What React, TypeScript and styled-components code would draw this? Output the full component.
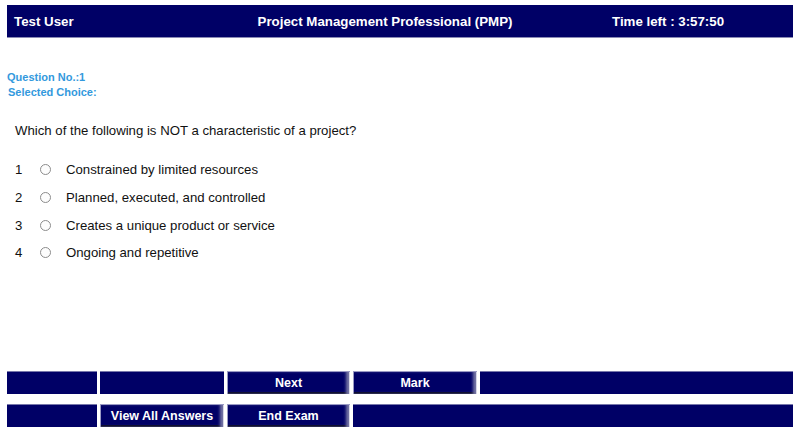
import * as React from 'react';
import styled, { createGlobalStyle } from 'styled-components';

const GlobalStyle = createGlobalStyle`
  html, body {
    margin: 0;
    padding: 0;
    background: #ffffff;
  }
  body {
    font-family: 'Liberation Sans', Arial, sans-serif;
  }
`;

const NAVY = '#000066';

const Page = styled.div`
  min-height: 100vh;
  box-sizing: border-box;
  padding: 5px 7px 6px 7px;
  display: flex;
  flex-direction: column;
`;

const Header = styled.div`
  height: 33px;
  background: ${NAVY};
  border-bottom: 1px solid #8a8ab4;
  box-sizing: border-box;
  display: grid;
  grid-template-columns: 238px 280px 1fr;
  align-items: center;
  color: #ffffff;
  font-weight: bold;
  font-size: 13.3px;
`;

const HeaderCell = styled.div<{ align: 'left' | 'center' }>`
  text-align: ${(p) => p.align};
  padding-left: ${(p) => (p.align === 'left' ? '7px' : '0')};
  white-space: nowrap;
`;

const TimeCell = styled.div`
  padding-left: 87px;
  white-space: nowrap;
`;

const Info = styled.div`
  margin-top: 32px;
  color: #3399dd;
  font-size: 11px;
  font-weight: bold;
  line-height: 15px;
`;

const InfoLine = styled.div<{ indent?: number }>`
  padding-left: ${(p) => p.indent || 0}px;
`;

const QuestionText = styled.div`
  margin-top: 22px;
  padding-left: 8px;
  font-size: 13.2px;
  line-height: 18px;
  color: #111111;
`;

const Options = styled.div`
  margin-top: 16px;
  padding-left: 8px;
  display: flex;
  flex-direction: column;
`;

const OptionRow = styled.label`
  height: 27.7px;
  display: grid;
  grid-template-columns: 25px 26px auto;
  align-items: center;
  font-size: 13.2px;
  color: #111111;
`;

const Radio = styled.input`
  appearance: none;
  -webkit-appearance: none;
  margin: 0;
  width: 11px;
  height: 11px;
  border-radius: 50%;
  border: 1px solid #8c8c8c;
  background: #fdfdfd;
  box-sizing: border-box;
`;

const Spacer = styled.div`
  flex: 1;
`;

const Bar = styled.div<{ cols: string }>`
  display: grid;
  grid-template-columns: ${(p) => p.cols};
  column-gap: 3px;
  height: 23px;
  & + & {
    margin-top: 10px;
  }
`;

const Cell = styled.div`
  background: ${NAVY};
  box-shadow: inset 0 1px 0 #7777aa;
`;

const Button = styled.button`
  background: ${NAVY};
  border: none;
  margin: 0;
  padding: 0;
  color: #ffffff;
  font-family: 'Liberation Sans', Arial, sans-serif;
  font-weight: bold;
  font-size: 12.5px;
  cursor: pointer;
  box-shadow: inset 1px 1px 0 #9a9ac4, inset -1px 0 0 #d6d6e6, inset -4px 0 3px #7474a4,
    inset 0 -2px 0 #00001e;
`;

const options = [
  'Constrained by limited resources',
  'Planned, executed, and controlled',
  'Creates a unique product or service',
  'Ongoing and repetitive',
];

export default function App(): React.ReactElement {
  return (
    <>
      <GlobalStyle />
      <Page>
        <Header>
          <HeaderCell align="left">Test User</HeaderCell>
          <HeaderCell align="center">Project Management Professional (PMP)</HeaderCell>
          <TimeCell>Time left : 3:57:50</TimeCell>
        </Header>

        <Info>
          <InfoLine>Question No.:1</InfoLine>
          <InfoLine indent={1}>Selected Choice:</InfoLine>
        </Info>

        <QuestionText>Which of the following is NOT a characteristic of a project?</QuestionText>

        <Options>
          {options.map((text, i) => (
            <OptionRow key={text}>
              <span>{i + 1}</span>
              <Radio type="radio" name="choice" />
              <span>{text}</span>
            </OptionRow>
          ))}
        </Options>

        <Spacer />

        <Bar cols="90px 124px 123px 124px 1fr">
          <Cell />
          <Cell />
          <Button>Next</Button>
          <Button>Mark</Button>
          <Cell />
        </Bar>
        <Bar cols="90px 124px 123px 1fr">
          <Cell />
          <Button>View All Answers</Button>
          <Button>End Exam</Button>
          <Cell />
        </Bar>
      </Page>
    </>
  );
}
